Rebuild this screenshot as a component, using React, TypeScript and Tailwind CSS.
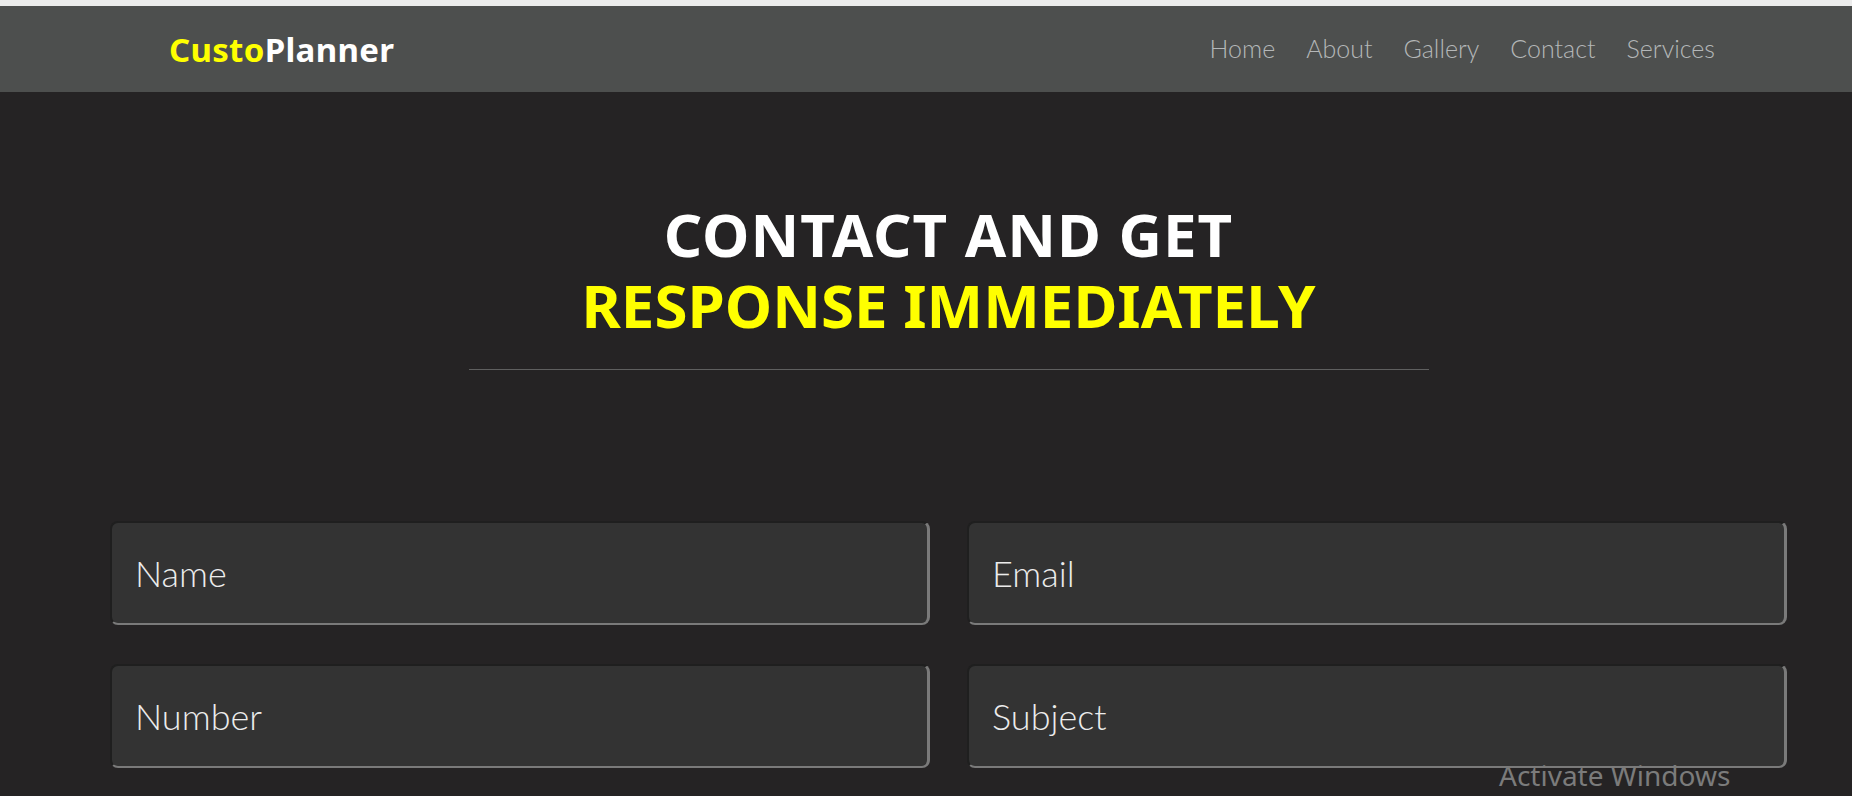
import React from 'react';

const navLinks = ['Home', 'About', 'Gallery', 'Contact', 'Services'];

const fields = ['Name', 'Email', 'Number', 'Subject'];

const App: React.FC = () => {
  return (
    <div className="relative min-h-screen overflow-hidden bg-[#252324] font-['Noto_Sans',sans-serif]">
      <div className="h-[6px] bg-[#ececec]"></div>

      <header className="flex h-[86px] items-center justify-between bg-[#4d4f4e] pl-[169px] pr-[137px]">
        <a href="#" className="text-[33px] font-bold leading-none tracking-[0.3px]">
          <span className="text-[#ffff00]">Custo</span>
          <span className="text-white">Planner</span>
        </a>
        <nav className="flex items-center gap-[31px]">
          {navLinks.map((link) => (
            <a key={link} href="#" className="font-['Lato',sans-serif] text-[25px] font-light text-[#b4b7b8]">
              {link}
            </a>
          ))}
        </nav>
      </header>

      <main className="pl-[110px] pr-[65px]">
        <section className="flex flex-col items-center pt-[107px]">
          <h1 className="text-center text-[60px] font-bold leading-[71px]">
            <span className="block tracking-[1px] text-white">CONTACT AND GET</span>
            <span className="block text-[#ffff00]">RESPONSE IMMEDIATELY</span>
          </h1>
          <div className="mt-[28px] h-px w-[960px] bg-[#5f5f5f]"></div>
        </section>

        <form className="mt-[151px] grid grid-cols-2 gap-x-[37px] gap-y-[39px]">
          {fields.map((field) => (
            <input
              key={field}
              type="text"
              placeholder={field}
              className="h-[104px] w-full rounded-lg border-2 border-r-[3px] border-t-[#1f1f1f] border-l-[#1f1f1f] border-r-[#7a7a7a] border-b-[#7a7a7a] bg-[#333333] pl-[23px] font-['Lato',sans-serif] text-[36px] font-light text-white outline-none placeholder:text-[#ececec]"
            />
          ))}
        </form>
      </main>

      <div className="absolute left-[1499px] top-[754px] text-[28px] text-[#7b7b7b]">
        Activate Windows
      </div>
    </div>
  );
};

export default App;
